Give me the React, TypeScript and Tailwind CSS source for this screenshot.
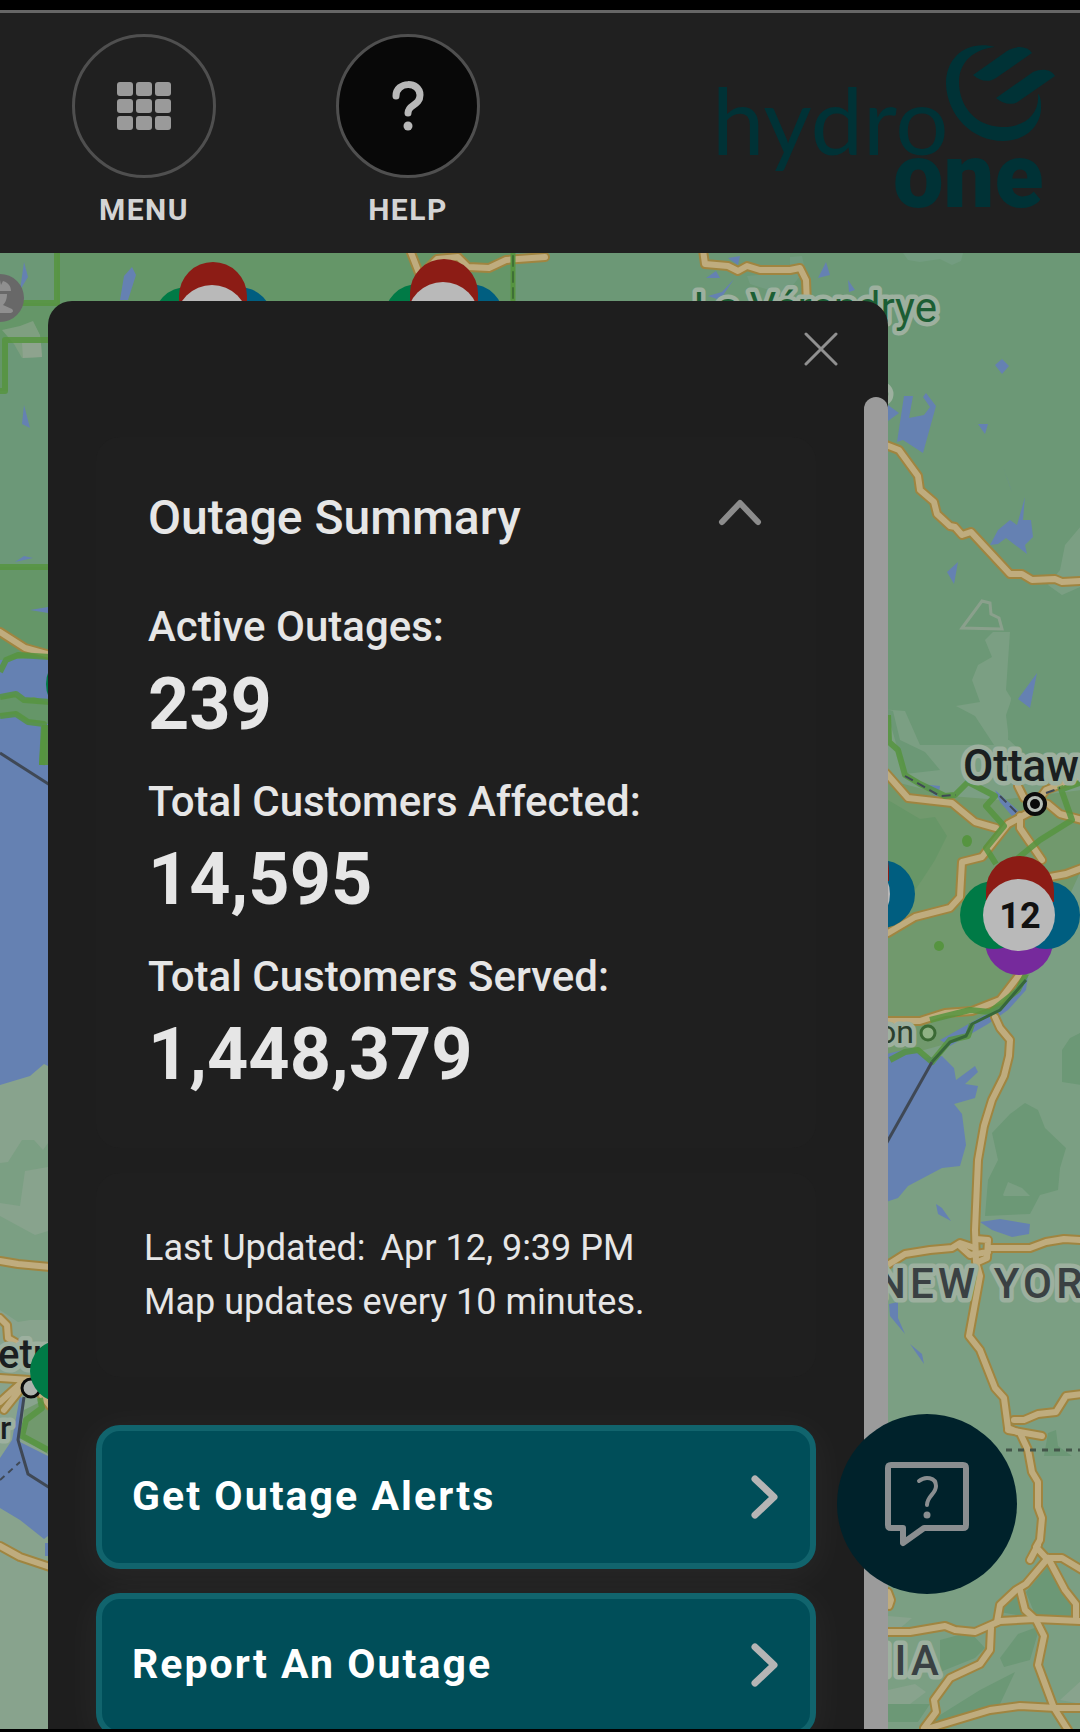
import { useState } from "react";

const stats = [
  { label: "Active Outages:", value: "239" },
  { label: "Total Customers Affected:", value: "14,595" },
  { label: "Total Customers Served:", value: "1,448,379" },
];

const actions = ["Get Outage Alerts", "Report An Outage"];

// roads are drawn twice: dark casing first, then the lighter fill
const roads = [
  "M410 250L419 273",
  "M428 268L437 259L458 257L468 267L489 268L506 260L545 257",
  "M703 250L705 264L728 266L738 271L747 266L760 270L790 270L800 268L806 280L807 305",
  "M886 445L899 450L918 476L920 490L934 502L937 514L950 526L955 527L962 535L971 532L1010 574L1022 574L1032 580L1055 579L1062 582L1082 581",
  "M0 632L25 648L50 655",
  "M0 1261L18 1264L50 1267",
  "M0 1318L7 1325L8 1338L20 1345",
  "M0 1378L30 1380L50 1406M0 1402L20 1384M4 1410L20 1390",
  "M0 1546L20 1557L50 1567",
  "M886 773L908 798L952 803L975 822L996 828",
  "M888 933L915 917L950 908L960 897L962 862L982 857L1008 824L1030 812L1046 790L1082 776",
  "M1018 786L1024 798L1048 804M1048 804L1060 814L1082 820M1020 816L1020 828L1042 860",
  "M1050 877L1066 874L1082 868",
  "M886 1021L920 1021L945 1013L972 1011L1000 1000L1020 974",
  "M995 1017L1000 1028L1010 1040L1009 1056L1004 1076L992 1100L984 1126L978 1160L975 1230L976 1262L980 1276L969 1336L980 1350L995 1388L1004 1398L1008 1428L1020 1433L1028 1450L1032 1472L1038 1482L1038 1507L1042 1518L1040 1540L1036 1547L1048 1560",
  "M1008 1430L1042 1436M1014 1420L1024 1420L1038 1414L1056 1412L1066 1396L1082 1394",
  "M886 1266L905 1254L930 1250L952 1248L960 1243L975 1248M988 1248L1030 1248L1046 1242L1064 1239L1082 1240",
  "M960 1246L970 1255L988 1252M976 1239L988 1240L987 1258L978 1262",
  "M1048 1558L1026 1584L1016 1590L1000 1605L997 1622M1048 1558L1065 1590L1076 1604L1076 1620M1048 1558L1062 1558L1082 1570M1030 1560L1038 1545",
  "M886 1632L910 1632L945 1626L955 1630L975 1632L1000 1621L1035 1619L1082 1621",
  "M1020 1590L1025 1610L1036 1620L1044 1636L1038 1665L1054 1708L1068 1730",
  "M991 1628L990 1650L980 1664L950 1678L934 1700L936 1712L924 1728",
  "M930 1728L990 1710L1020 1706L1056 1708L1082 1708",
  "M888 1592L891 1600L889 1606",
];

const lakes = [
  "M124 276L132 267L136 275L128 300L120 300Z",
  "M20 290L28 277L24 262Z",
  "M24 405L30 428L22 424Z",
  "M15 562L24 556L33 558Z",
  "M30 610L48 607L48 613Z",
  "M728 258L740 256L738 265Z",
  "M706 278L716 271L720 278Z",
  "M818 278L826 262L830 275Z",
  "M848 280L855 290L849 292Z",
  "M708 296L722 292L734 279L720 300Z",
  "M995 365L1002 359L1009 366L1002 374Z",
  "M888 405L899 413L888 421Z",
  "M904 396L913 396L909 418L924 415L930 407L923 397L926 393L936 406L923 453L903 440L897 442Z",
  "M978 424L988 424L985 434Z",
  "M1003 467L1010 486L1012 492Z",
  "M990 545L998 530L1010 520L1017 525L1025 497L1023 520L1031 520L1033 537L1025 545L1027 554L1006 538L998 544Z",
  "M947 572L958 562L954 584Z",
  "M1018 699L1037 673L1030 708Z",
  "M936 1204L942 1208L951 1221L938 1214Z",
  "M980 1222L1000 1219L1030 1224L1029 1234L1012 1237L992 1230Z",
  "M889 1304L898 1302L898 1318L905 1334L890 1316Z",
  "M910 1344L922 1354L924 1364Z",
];

const serviceBorders = [
  "M57 253V303H0",
  "M50 340H5V391H0",
  "M0 567H50",
  "M0 672L6 660L18 655L50 657",
  "M0 697L16 694L24 700L50 702M0 716L16 714L28 722L44 724L42 765",
  "M888 715L889 742L898 750L905 775L920 784L945 796L955 795L968 782L995 796L986 806L1004 826L986 848L996 864",
  "M1060 786L1072 820L1040 840L1018 858M1060 790L1082 782",
  "M890 1060L905 1052L918 1050L932 1062L950 1040L968 1036L972 1024",
  "M930 1020L970 1010L990 1012L1018 990L1026 974",
  "M40 1398L42 1408L26 1420L22 1436L48 1450",
];

type ClusterProps = { x: number; y: number; count?: string };

const Cluster = ({ x, y, count }: ClusterProps) => (
  <g>
    <circle cx={x} cy={y + 26} r={34} fill="#762a9c" />
    <circle cx={x - 25} cy={y} r={34} fill="#007a46" />
    <circle cx={x + 27} cy={y} r={34} fill="#005e80" />
    <path
      d={`M${x - 33} ${y - 25}a34 34 0 0 1 68 0v12h-68z`}
      fill="#8c1c15"
    />
    <circle cx={x} cy={y} r={36} fill="#b9b9b9" />
    {count && (
      <text
        x={x + 1}
        y={y + 13}
        textAnchor="middle"
        className="fill-[#111] text-[36px] font-bold"
      >
        {count}
      </text>
    )}
  </g>
);

const OutageMap = () => (
  <svg
    viewBox="0 253 1080 1476"
    preserveAspectRatio="xMinYMin slice"
    className="absolute inset-0 h-full w-full"
    role="img"
    aria-label="Outage map"
  >
    <rect y="253" width="1080" height="1480" fill="#6c9876" />

    {/* service territory */}
    <path d="M57 253H513V400H0V303H57Z" fill="#659668" />
    <path d="M8 343H60V567H0V391H8Z" fill="#6c9878" />
    <path d="M0 567H60V1100H0Z" fill="#659668" />

    {/* lighter land */}
    <path
      d="M903 253H963L961 261L952 265L940 259L920 262L908 260Z M790 257L802 256L805 270L785 295L750 284L747 276L790 272Z"
      fill="#739c80"
    />
    <path
      d="M1082 525L1065 545L1060 570L1048 585L1062 595L1082 586Z M985 640L993 632L1010 632L1006 690L1011 698L1008 740H1082V1732H880V709L905 711L920 745L994 745L975 716L956 706L980 702L972 680L978 665L992 657Z"
      fill="#7b9f83"
    />
    <path
      d="M1009 740L1006 715L1012 698H1082V786L1050 775L1020 750Z M886 709L893 711L900 740L925 752L940 770L905 774Z"
      fill="#6c9876"
    />
    <path
      d="M888 780L950 796L1000 800L1082 790V868L1040 960L1010 1000L960 1040L888 1060Z"
      fill="#71996d"
    />
    <path
      d="M888 800L920 819L935 817L947 836L935 860L922 880L915 890L888 870Z"
      fill="#679667"
    />
    <path
      d="M1062 1050L1070 1038L1082 1032V1085L1062 1082Z M992 1133L1010 1114L1025 1103L1038 1110L1045 1128L1066 1148L1060 1168L1058 1190L1040 1195L1030 1214L985 1216L988 1180L998 1160Z"
      fill="#6c9876"
    />
    <path
      d="M1003 1195L1008 1182L1022 1188L1030 1196L1004 1196Z"
      fill="#7b9f83"
    />
    <path
      d="M1048 1566L1072 1600L1072 1618L1036 1617L1026 1592Z M1000 1612L1018 1594L1022 1616Z M940 1640L970 1632L985 1648L975 1658L940 1672Z M1000 1658L1018 1634L1040 1626L1030 1660L1004 1667Z M932 1720L980 1690L1015 1672L1000 1704L945 1724Z M888 1704L930 1704L918 1722L888 1722Z M1048 1433L1056 1430L1058 1446L1072 1456L1044 1456Z"
      fill="#6c9876"
    />
    <path
      d="M888 1616L912 1618L898 1630H888Z M1060 1700L1082 1680V1704Z M888 1690L915 1684L926 1692L910 1704H888Z"
      fill="#88a38d"
    />

    {/* great lakes */}
    <path d="M0 660L48 657V1090H0Z" fill="#6581b2" />
    <path
      d="M0 697L14 694L22 700L34 697L48 702V724L28 722L14 714L0 716Z"
      fill="#659668"
    />
    <path d="M42 725H48V765H39Z" fill="#5a9148" />
    <path d="M0 1085L30 1076L44 1064L48 1066V1732H0Z" fill="#88a38d" />
    <path
      d="M0 1163L8 1162L22 1140L34 1140L43 1150L48 1143V1167L25 1171L20 1206L0 1203Z M0 1216L35 1235L48 1231V1320L30 1320L18 1322L0 1310Z"
      fill="#7b9f83"
    />
    <path
      d="M20 1396L24 1400L20 1442L48 1456V1536L44 1539L20 1520L0 1508V1458L12 1440Z M45 1543H48V1556H45Z"
      fill="#6581b2"
    />
    <path d="M24 1410L48 1398V1454L22 1438Z" fill="#71996d" />
    <path
      d="M886 1054L912 1048L925 1058L942 1056L954 1068L956 1080L975 1066L978 1072L965 1084L978 1086L975 1098L954 1104L962 1114L966 1145L960 1166L942 1168L908 1186L898 1198L886 1202Z"
      fill="#6581b2"
    />
    <path
      d="M1028 976L1026 990L1008 1010L988 1024L950 1046L940 1040L990 1012Z M920 784L940 786L938 798Z M995 790L1020 812L1012 816L1000 802Z"
      fill="#6581b2"
    />

    {lakes.map((d) => (
      <path key={d} d={d} fill="#6581b2" />
    ))}

    {/* small grey reserves */}
    <path d="M2 330L20 326L33 321L40 335L42 357L22 358L14 344Z" fill="#7f9f80" />
    <path d="M22 343L41 343L42 357L23 358Z" fill="#8ea38e" />
    <path
      d="M962 628L982 601L990 603L991 614L999 618L1002 629Z"
      fill="none"
      stroke="#8aa08c"
      strokeWidth="3"
    />

    <g fill="none" strokeLinejoin="round" strokeLinecap="round">
      {roads.map((d) => (
        <path key={d} d={d} stroke="#a08540" strokeWidth="10" />
      ))}
      {roads.map((d) => (
        <path key={d} d={d} stroke="#bfac7e" strokeWidth="6" />
      ))}
      {serviceBorders.map((d) => (
        <path
          key={d}
          d={d}
          stroke="#569440"
          strokeOpacity="0.85"
          strokeWidth="6"
          strokeLinecap="butt"
        />
      ))}
      <path d="M513 253V305" stroke="#569440" strokeWidth="5" />
      <path d="M513 256V305" stroke="#3f7035" strokeDasharray="10 6" strokeWidth="2" />
    </g>
    <ellipse cx="967" cy="841" rx="5" ry="6" fill="#569440" />
    <ellipse cx="939" cy="946" rx="5" ry="5" fill="#569440" />

    {/* borders */}
    <g fill="none" stroke="#3f4855" strokeWidth="3">
      <path d="M0 753L50 785" />
      <path d="M24 1397L18 1440L28 1474L50 1488" />
      <path d="M932 1062L886 1144" />
      <path d="M0 1480L20 1462" strokeWidth="2" strokeDasharray="6 5" />
      <path d="M1006 1450H1082" stroke="#44564a" strokeDasharray="6 6" />
      <path
        d="M905 776L940 796L956 795M1000 796L1018 814M1046 793L1060 788"
        strokeWidth="2"
        strokeDasharray="9 5"
      />
      <path d="M932 1062L950 1042L966 1036L972 1024L1000 1010L1026 980" stroke="#37683a" />
    </g>

    {/* place names */}
    <g
      className="font-medium"
      stroke="#9db09f"
      strokeWidth="9"
      strokeLinejoin="round"
      paintOrder="stroke"
      fill="#3a4143"
    >
      <text x="937" y="322" textAnchor="end" fill="#1c5e34" className="text-[42px] font-normal">
        La Vérendrye
      </text>
      <text x="963" y="781" fill="#1b1f21" className="text-[44px]">
        Ottawa
      </text>
      <text x="914" y="1043" textAnchor="end" fill="#2b3f2e" className="text-[32px] font-normal">
        Kingston
      </text>
      <text x="876" y="1298" className="text-[42px] tracking-widest">
        NEW YORK
      </text>
      <text x="943" y="1675" textAnchor="end" className="text-[42px] tracking-widest">
        PENNSYLVANIA
      </text>
      <text x="-2" y="1368" fill="#1b1f21" className="text-[40px]">
        etroit
      </text>
      <text x="0" y="1439" fill="#1b1f21" className="text-[32px]">
        r
      </text>
    </g>
    <circle cx="881" cy="394" r="10" fill="none" stroke="#9db09f" strokeWidth="5" />

    <g fill="#b5bdb5" stroke="#0b0b0b">
      <circle cx="1035" cy="804" r="10" strokeWidth="4" />
      <circle cx="1035" cy="804" r="5" fill="#0b0b0b" stroke="none" />
      <circle cx="928" cy="1033" r="7" fill="#8fb184" stroke="#3b6a34" strokeWidth="3" />
      <circle cx="31" cy="1388" r="9" fill="#aeb3ad" strokeWidth="3" />
    </g>

    {/* crew marker */}
    <circle cx="0" cy="298" r="24" fill="#686868" />
    <path
      d="M-8 291C-8 284 -4 281 0 280L1 285L3 281C9 283 11 287 11 291ZM0 294H7C7 300 5 303 3 305L12 309C14 311 13 313 9 313H0Z"
      fill="#8f8f8f"
    />

    <Cluster x={212} y={321} />
    <Cluster x={443} y={318} />
    <Cluster x={105} y={684} />
    <Cluster x={854} y={894} />
    <Cluster x={1019} y={915} count="12" />
    <circle cx="61" cy="1371" r="31" fill="#007a46" />
  </svg>
);

const Logo = () => (
  <svg
    viewBox="716 34 340 190"
    className="ml-auto mr-6 w-[340px] overflow-visible"
    fill="#003236"
    role="img"
    aria-label="hydro one"
  >
    <path d="M995 47C968 40 946 56 946 84C947 115 972 141 1003 141C1027 141 1042 124 1041 106C1041 100 1040 95 1038 94C1040 116 1022 128 1001 127C976 126 959 107 959 82C959 62 974 49 995 47Z" />
    <path d="M973 75L1007 51C1017 45 1027 46 1032 53L996 78C988 83 980 81 973 75Z" />
    <path d="M996 98L1033 72C1042 68 1051 69 1055 76L1019 101C1012 106 1003 104 996 98Z" />
    <text x="712" y="155" className="font-[Lato] text-[94px]">
      hydro
    </text>
    <text x="893" y="207" className="text-[90px] font-black">
      one
    </text>
  </svg>
);

const Header = () => (
  <header className="flex items-start border-t-3 border-[#666] bg-[#202020] pt-[21px] pb-[25px] pl-[72px]">
    <nav className="flex gap-[120px]">
      <button className="flex flex-col items-center gap-3.5">
        <span className="flex size-36 items-center justify-center rounded-full border-3 border-[#4f4f4f]">
          <svg width="54" height="50" viewBox="0 0 54 50" fill="#9a9a9a">
            {[0, 19, 38].map((x) =>
              [1, 18, 35].map((y) => (
                <rect key={`${x}-${y}`} x={x} y={y} width="16" height="14" rx="3" />
              ))
            )}
          </svg>
        </span>
        <span className="text-[30px] leading-9 font-bold tracking-wider">MENU</span>
      </button>
      <button className="flex flex-col items-center gap-3.5">
        <span className="flex size-36 items-center justify-center rounded-full border-3 border-[#4f4f4f] bg-[#080808]">
          <svg width="32" height="50" viewBox="0 0 32 50" fill="none">
            <path
              d="M4 15C4 0 28 0 28 14C28 25 16 23 16 32"
              stroke="#b8b8b8"
              strokeWidth="7"
              strokeLinecap="round"
            />
            <circle cx="16" cy="45" r="4.5" fill="#b8b8b8" />
          </svg>
        </span>
        <span className="text-[30px] leading-9 font-bold tracking-wider">HELP</span>
      </button>
    </nav>
    <Logo />
  </header>
);

const App = () => {
  const [panelOpen, setPanelOpen] = useState(true);
  const [summaryOpen, setSummaryOpen] = useState(true);

  return (
    <div className="flex h-screen flex-col overflow-hidden bg-black pt-[10px] pb-[3px] font-[Roboto,sans-serif] text-[#d4d4d4]">
      <Header />

      <main className="relative flex min-h-0 flex-1 overflow-hidden pt-12 pr-48 pl-12">
        <OutageMap />

        {panelOpen && (
          <section className="relative flex min-w-0 flex-1 flex-col overflow-hidden rounded-t-3xl bg-[#1e1e1e] text-[#e6e6e6]">
            <div className="flex h-24 shrink-0 items-center justify-end pr-[50px]">
              <button aria-label="Close" onClick={() => setPanelOpen(false)}>
                <svg width="34" height="34" viewBox="0 0 34 34" className="block">
                  <path
                    d="M2 2L32 32M32 2L2 32"
                    stroke="#909090"
                    strokeWidth="3"
                    strokeLinecap="round"
                  />
                </svg>
              </button>
            </div>

            <div className="flex min-h-0 flex-1">
              <div className="min-w-0 flex-1 overflow-hidden px-12 pt-10">
                <div className="rounded-3xl bg-[#1f1f1f] px-[52px] pt-[49px] pb-11">
                  <button
                    className="flex w-full items-center justify-between text-left"
                    aria-expanded={summaryOpen}
                    onClick={() => setSummaryOpen(!summaryOpen)}
                  >
                    <h2 className="text-[48px] leading-[64px] font-medium">
                      Outage Summary
                    </h2>
                    <svg width="46" height="40" viewBox="0 0 46 40">
                      <path
                        d="M4 24L22 5L40 24"
                        fill="none"
                        stroke="#8c8c8c"
                        strokeWidth="6"
                        strokeLinecap="round"
                        strokeLinejoin="round"
                      />
                    </svg>
                  </button>

                  {summaryOpen && (
                    <dl className="mt-[49px] flex flex-col gap-5">
                      {stats.map((stat) => (
                        <div key={stat.label}>
                          <dt className="text-[42px] leading-[56px] font-medium">
                            {stat.label}
                          </dt>
                          <dd className="text-[72px] leading-[99px] font-bold">
                            {stat.value}
                          </dd>
                        </div>
                      ))}
                    </dl>
                  )}
                </div>

                <div className="mt-[25px] rounded-3xl bg-[#1f1f1f] px-12 py-12 text-[36px] leading-[54px]">
                  <p>
                    Last Updated:<span className="ml-[15px]">Apr 12, 9:39 PM</span>
                  </p>
                  <p>Map updates every 10 minutes.</p>
                </div>

                <div className="mt-12 flex flex-col gap-6">
                  {actions.map((action) => (
                    <button
                      key={action}
                      className="flex h-36 items-center justify-between rounded-3xl border-6 border-[#11646d] bg-[#004e59] pr-8 pl-[30px] text-[41px] font-bold tracking-wider text-white shadow-[0_6px_36px_6px_rgba(255,255,255,0.04)]"
                    >
                      {action}
                      <svg width="28" height="46" viewBox="0 0 28 46">
                        <path
                          d="M5 5L24 23L5 41"
                          fill="none"
                          stroke="#b5b5b5"
                          strokeWidth="7"
                          strokeLinecap="round"
                          strokeLinejoin="round"
                        />
                      </svg>
                    </button>
                  ))}
                </div>
              </div>
              <div className="w-6 shrink-0 rounded-t-full bg-[#9b9b9b]" />
            </div>
          </section>
        )}

        {/* feedback bubble */}
        <button
          aria-label="Feedback"
          className="absolute right-[63px] bottom-[135px] flex size-[180px] items-center justify-center rounded-full bg-[#00222b]"
        >
          <svg width="84" height="86" viewBox="0 0 84 86" fill="none" stroke="#8a8e90">
            <path
              d="M6 4H78Q81 4 81 7V64Q81 67 78 67H39L18 82V67H6Q3 67 3 64V7Q3 4 6 4Z"
              strokeWidth="6"
              strokeLinejoin="round"
            />
            <path
              d="M34 20C40 15 51 16 51 25C51 33 42 35 42 44"
              strokeWidth="4"
              strokeLinecap="round"
            />
            <circle cx="42" cy="54" r="3.5" fill="#8a8e90" stroke="none" />
          </svg>
        </button>
      </main>
    </div>
  );
};

export default App;
